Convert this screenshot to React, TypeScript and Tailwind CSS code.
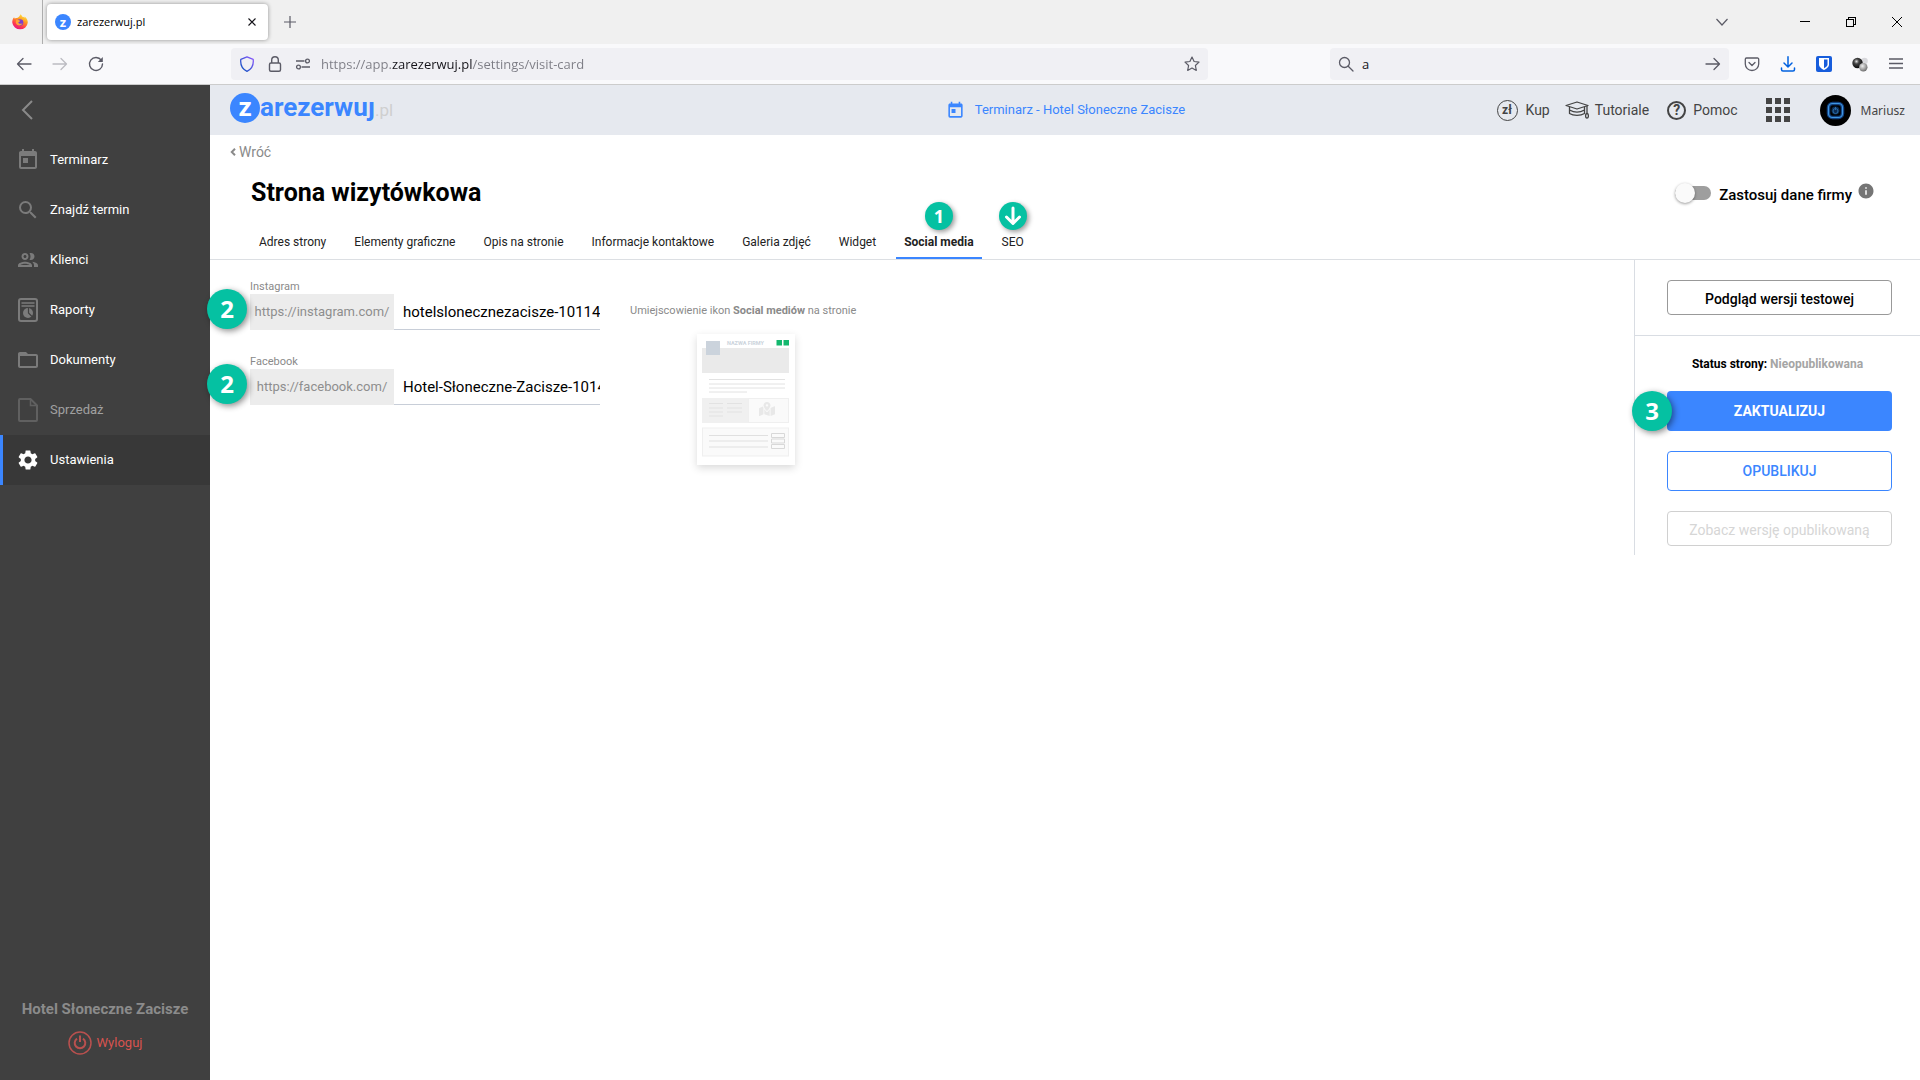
import { useState } from "react";
import type { ReactNode } from "react";
import { FaMapMarkedAlt } from "react-icons/fa";
import { MdFolderOpen, MdInfo, MdOutlineGroup, MdSearch, MdSettings, MdToday } from "react-icons/md";

const TABS = [
    "Adres strony",
    "Elementy graficzne",
    "Opis na stronie",
    "Informacje kontaktowe",
    "Galeria zdjęć",
    "Widget",
    "Social media",
    "SEO",
];

function ReportIcon() {
    return (
        <svg viewBox="0 0 24 24" className="size-6" fill="none" stroke="currentColor">
            <rect x="3" y="1" width="18" height="22" rx="2" strokeWidth="2" />
            <path d="M5.5 5h13M5.5 8h13" strokeWidth="1.5" />
            <circle cx="12" cy="15" r="5" fill="currentColor" stroke="none" />
            <path d="M12.5 10v5l3.500 3.500" stroke="#404040" strokeWidth="1.200" />
        </svg>
    );
}

function FileIcon() {
    return (
        <svg viewBox="0 0 24 24" className="size-6" fill="none" stroke="currentColor" strokeWidth="2">
            <path d="M4 1h10.500L21 7.500V22a1 1 0 0 1-1 1H4a1 1 0 0 1-1-1V2a1 1 0 0 1 1-1z" />
            <path d="M14.500 1.500v6H21" strokeWidth="1.500" />
        </svg>
    );
}

const MENU: { label: string; icon: ReactNode; active?: boolean; dim?: boolean }[] = [
    { label: "Terminarz", icon: <MdToday className="size-6" /> },
    { label: "Znajdź termin", icon: <MdSearch className="size-6" /> },
    { label: "Klienci", icon: <MdOutlineGroup className="size-6" /> },
    { label: "Raporty", icon: <ReportIcon /> },
    { label: "Dokumenty", icon: <MdFolderOpen className="size-6" /> },
    { label: "Sprzedaż", icon: <FileIcon />, dim: true },
    { label: "Ustawienia", icon: <MdSettings className="size-6" />, active: true },
];

function FirefoxIcon() {
    return (
        <svg viewBox="0 0 16 16" className="size-4">
            <defs>
                <linearGradient id="fox" x1="0.8" y1="0" x2="0.3" y2="1">
                    <stop offset="0" stopColor="#fff44f" />
                    <stop offset="0.4" stopColor="#ff9a1f" />
                    <stop offset="0.75" stopColor="#ff3750" />
                    <stop offset="1" stopColor="#e31587" />
                </linearGradient>
            </defs>
            <path d="M8.500.2c1 .8 1.500 1.700 1.800 2.600.9-.2 1.700.300 2.200 1 .200-.6.200-.9 0-1.400 2.200 1.500 3.400 3.800 3.300 6.200A7.800 7.500 0 0 1 .3 8.800C.1 6.500.8 4.500 2.200 3.200c0 .7.100 1 .4 1.400.6-.6 1.400-.8 2.300-.7C5.800 3.800 7.700 2.500 8.500.2z" fill="url(#fox)" />
            <circle cx="8" cy="8.500" r="3.300" fill="#7a3fd0" />
            <path d="M4.500 5.500c2 0 2.300 1 4 1.200-.6 1-1.800.9-2.200 1.800.5 1.500 2.500 1.600 4.200.7-.7 2-3.600 3-5.500 1.500C3.400 9.500 3.500 7 4.500 5.500z" fill="#ffa436" />
        </svg>
    );
}

function BrowserTabs() {
    return (
        <div className="flex h-11 items-center bg-[#f0f0f0] text-[#15141a]">
            <div className="flex h-full w-[43px] items-center border-r border-[#aeaeae] pl-3">
                <FirefoxIcon />
            </div>
            <div className="ml-1 flex h-9 w-[221px] items-center rounded bg-white px-2 shadow-[0_0_4px_rgba(0,0,0,0.4)]">
                <span className="flex size-4 items-center justify-center rounded-full bg-[#3b86ff] text-[13px] leading-none font-bold text-white">z</span>
                <span className="ml-1.5 flex-1 text-[11px] text-black">zarezerwuj.pl</span>
                <button aria-label="Zamknij kartę" className="mr-1">
                    <svg viewBox="0 0 8 8" className="size-2" stroke="currentColor" strokeWidth="1.1">
                        <path d="M.5.5l7 7M7.500.5l-7 7" />
                    </svg>
                </button>
            </div>
            <button aria-label="Nowa karta" className="ml-4">
                <svg viewBox="0 0 12 12" className="size-3" stroke="#5b5b66" strokeWidth="1.200">
                    <path d="M6 0v12M0 6h12" />
                </svg>
            </button>
            <div className="ml-auto flex items-center pr-[18px]">
                <button aria-label="Lista kart" className="mr-[72px]">
                    <svg viewBox="0 0 12 8" className="h-2 w-3" fill="none" stroke="#5b5b66" strokeWidth="1.200">
                        <path d="M.5 1L6 7l5.500-6" />
                    </svg>
                </button>
                <button aria-label="Minimalizuj" className="mr-9">
                    <svg viewBox="0 0 10 10" className="size-2.5" stroke="#000" shapeRendering="crispEdges">
                        <path d="M0 4.500h10" />
                    </svg>
                </button>
                <button aria-label="Przywróć" className="mr-9">
                    <svg viewBox="0 0 10 10" className="size-2.5" fill="none" stroke="#000" shapeRendering="crispEdges">
                        <path d="M.5 2.500h7v7h-7zM2.500 2.500v-2h7v7h-2" />
                    </svg>
                </button>
                <button aria-label="Zamknij">
                    <svg viewBox="0 0 10 10" className="size-2.5" stroke="#000">
                        <path d="M0 0l10 10M10 0L0 10" />
                    </svg>
                </button>
            </div>
        </div>
    );
}

function ArrowRight() {
    return (
        <svg viewBox="0 0 16 16" className="size-4" fill="none" stroke="currentColor" strokeWidth="1.300" strokeLinecap="round" strokeLinejoin="round">
            <path d="M1 8h13.500M9 2.500L14.500 8 9 13.500" />
        </svg>
    );
}

function BrowserToolbar() {
    return (
        <div className="flex h-[41px] items-center border-b border-[#cccccc] bg-[#f9f9fb] pr-1.5 text-[#5b5b66]">
            <div className="flex w-[231px] items-center gap-5 pl-4">
                <button aria-label="Wstecz" className="rotate-180">
                    <ArrowRight />
                </button>
                <button aria-label="Dalej" className="text-[#bcbcc2]">
                    <ArrowRight />
                </button>
                <button aria-label="Odśwież">
                    <svg viewBox="0 0 16 16" className="size-4" fill="none" stroke="currentColor" strokeWidth="1.400">
                        <path d="M13.300 4.200A6.500 6.500 0 1 0 14.500 8" strokeLinecap="round" />
                        <path d="M14.800 1v5h-5z" fill="currentColor" stroke="none" />
                    </svg>
                </button>
            </div>
            <div className="flex h-8 flex-1 items-center rounded bg-[#f0f0f4] px-2">
                <svg viewBox="0 0 16 16" className="size-4" fill="none">
                    <defs>
                        <linearGradient id="shield" x1="1" y1="0" x2="0" y2="1">
                            <stop offset="0" stopColor="#9059ff" />
                            <stop offset="1" stopColor="#0250bb" />
                        </linearGradient>
                    </defs>
                    <path d="M8 .8l6.200 2.500c.6 5.500-1.300 9.800-6.200 12-4.900-2.200-6.800-6.500-6.200-12z" stroke="url(#shield)" strokeWidth="1.300" strokeLinejoin="round" />
                </svg>
                <svg viewBox="0 0 16 16" className="ml-3 size-4" fill="none" stroke="currentColor" strokeWidth="1.400">
                    <rect x="2.500" y="7" width="11" height="8.300" rx="1.500" />
                    <path d="M4.700 7V4a3.300 3.300 0 0 1 6.600 0v3" />
                </svg>
                <svg viewBox="0 0 16 16" className="ml-3 size-4" fill="none" stroke="currentColor" strokeWidth="1.300">
                    <path d="M1 5h8.500M6.500 11H15" />
                    <circle cx="12.500" cy="5" r="1.900" />
                    <circle cx="3.500" cy="11" r="1.900" />
                </svg>
                {/* the domain is darker than the rest of the address */}
                <input
                    aria-label="Adres"
                    defaultValue="https://app.zarezerwuj.pl/settings/visit-card"
                    className="ml-[10px] flex-1 bg-[linear-gradient(90deg,#7c7c84_71px,#15141a_71px_151px,#7c7c84_151px)] bg-clip-text pt-0.5 text-[13px] text-transparent outline-none"
                />
                <svg viewBox="0 0 16 16" className="size-4" fill="none" stroke="currentColor" strokeWidth="1.200" strokeLinejoin="round">
                    <path d="M8 1l2.100 4.500 4.900.6-3.600 3.400.9 4.900L8 12l-4.300 2.400.9-4.900L1 6.100l4.900-.6z" />
                </svg>
            </div>
            <div className="ml-[122px] flex h-8 w-[399px] items-center rounded bg-[#f0f0f4] px-2">
                <svg viewBox="0 0 16 16" className="size-4" fill="none" stroke="currentColor" strokeWidth="1.300" strokeLinecap="round">
                    <circle cx="6.500" cy="6.500" r="5" />
                    <path d="M10.200 10.200l4.800 4.800" />
                </svg>
                <input aria-label="Szukaj" defaultValue="a" className="ml-2 min-w-0 flex-1 pt-0.5 text-[13px] text-[#15141a] outline-none" />
                <button aria-label="Szukaj w sieci">
                    <ArrowRight />
                </button>
            </div>
            <div className="ml-[5px] flex items-center *:flex *:w-9 *:justify-center">
                <button aria-label="Pocket">
                    <svg viewBox="0 0 16 16" className="size-4" fill="none" stroke="currentColor" strokeWidth="1.300" strokeLinecap="round" strokeLinejoin="round">
                        <path d="M2.500 2h11a1.200 1.200 0 0 1 1.200 1.200V8a6.700 6.500 0 0 1-13.400 0V3.200A1.200 1.200 0 0 1 2.500 2z" />
                        <path d="M5 6.500l3 3 3-3" />
                    </svg>
                </button>
                <button aria-label="Pobrane">
                    <svg viewBox="0 0 16 16" className="size-4" fill="none" stroke="#0061e0" strokeWidth="1.500" strokeLinecap="round" strokeLinejoin="round">
                        <path d="M8 .8v10M4 7l4 4 4-4M1.500 12v1.500a1.500 1.500 0 0 0 1.500 1.500h10a1.500 1.500 0 0 0 1.500-1.500V12" />
                    </svg>
                </button>
                <button aria-label="Bitwarden">
                    <svg viewBox="0 0 16 16" className="size-4">
                        <rect width="16" height="16" rx="2" fill="#175ddc" />
                        <path d="M3 2h10v6.500c0 3-3.500 4.800-5 5.500-1.500-.7-5-2.500-5-5.500z" fill="#fff" />
                        <path d="M8 3.500h3.500v5c0 1.700-2 3-3.500 3.800z" fill="#175ddc" />
                    </svg>
                </button>
                <button aria-label="Rozszerzenie">
                    <svg viewBox="0 0 16 16" className="size-4">
                        <defs>
                            <radialGradient id="ball-dark" cx="0.4" cy="0.35" r="0.6">
                                <stop offset="0" stopColor="#ddd" />
                                <stop offset="0.4" stopColor="#444" />
                                <stop offset="1" stopColor="#111" />
                            </radialGradient>
                            <radialGradient id="ball-light" cx="0.4" cy="0.35" r="0.7">
                                <stop offset="0" stopColor="#eee" />
                                <stop offset="1" stopColor="#666" />
                            </radialGradient>
                        </defs>
                        <circle cx="12.500" cy="5" r="3.300" fill="#d8d8dc" />
                        <circle cx="5.500" cy="7" r="5.200" fill="url(#ball-dark)" />
                        <circle cx="11.300" cy="11.300" r="4.200" fill="url(#ball-light)" />
                    </svg>
                </button>
                <button aria-label="Menu przeglądarki">
                    <svg viewBox="0 0 14 12" className="h-3 w-3.5" stroke="currentColor" strokeWidth="1.300">
                        <path d="M0 1h14M0 5.500h14M0 10h14" />
                    </svg>
                </button>
            </div>
        </div>
    );
}

function Sidebar() {
    return (
        <aside className="flex w-[210px] shrink-0 flex-col bg-[#404040]">
            <div className="flex h-[50px] items-center pl-[21px]">
                <button aria-label="Zwiń menu">
                    <svg viewBox="0 0 12 20" className="h-5 w-3" fill="none" stroke="#8a8a8a" strokeWidth="2">
                        <path d="M11 1L2 10l9 9" />
                    </svg>
                </button>
            </div>
            <nav>
                {MENU.map(({ label, icon, active, dim }) => (
                    <a
                        key={label}
                        href="#"
                        className={
                            active
                                ? "flex h-[50px] items-center gap-2.5 border-l-3 border-[#3b86ff] bg-[#383838] pl-[13px]"
                                : "flex h-[50px] items-center gap-2.5 pl-4"
                        }
                    >
                        <span className={active ? "text-white" : dim ? "text-[#606060]" : "text-[#7b7b7b]"}>{icon}</span>
                        <span className={dim ? "text-[13px] text-[#a0a0a0]" : "text-[13px] text-white"}>{label}</span>
                    </a>
                ))}
            </nav>
            <div className="mt-auto flex flex-col items-center pb-[25px]">
                <span className="text-[15px] leading-5 font-bold text-[#8b8b8b]">Hotel Słoneczne Zacisze</span>
                <a href="#" className="mt-3 flex items-center gap-[5px] text-[13px] text-[#d9534f]">
                    <svg viewBox="0 0 24 24" className="size-6" fill="none" stroke="#b9504e" strokeWidth="1.500">
                        <circle cx="12" cy="12" r="11" />
                        <path d="M9 7.600a5.300 5.300 0 1 0 6 0M12 4.500v6.500" strokeWidth="2" />
                    </svg>
                    Wyloguj
                </a>
            </div>
        </aside>
    );
}

function Logo() {
    return (
        <a href="#" className="flex items-center pb-1">
            <span className="flex size-[30px] items-center justify-center rounded-full bg-[#3b86ff] pb-0.5 text-[26px] leading-none font-bold text-white">z</span>
            <span className="flex items-baseline pb-0.5 text-[#3b86ff]">
                {/* the wordmark has a j without its dot */}
                <span className="text-[26px] leading-8 font-bold">arezerwuȷ</span>
                <span className="text-[17px] text-[#cfcfcf]">.pl</span>
            </span>
        </a>
    );
}

function AppHeader() {
    return (
        <header className="grid h-[50px] grid-cols-3 items-center bg-[#e6e9ef] pr-[15px] pl-5 text-sm text-[#444]">
            <Logo />
            <a href="#" className="flex items-center justify-center gap-2.5 pr-1 text-[13px] text-[#3b86ff]">
                <MdToday className="size-[19px]" />
                Terminarz - Hotel Słoneczne Zacisze
            </a>
            <div className="flex items-center justify-end">
                <a href="#" className="flex items-center gap-2">
                    <span className="flex size-[21px] items-center justify-center rounded-full border-[1.5px] border-[#444] pb-px text-xs leading-none font-bold">zł</span>
                    Kup
                </a>
                <a href="#" className="ml-[15px] flex items-center gap-[6px]">
                    <svg viewBox="0 0 24 18" className="h-[18px] w-6" fill="none" stroke="currentColor" strokeWidth="1.300" strokeLinejoin="round">
                        <path d="M1 4.500L12 1l11 3.500L12 8z" />
                        <path d="M4.500 6v6.500c4 2.500 11 2.500 15 0V6M4.500 9c4.500 2.500 10.500 2.500 15 0" />
                        <path d="M22 5v7.500" />
                        <ellipse cx="22" cy="14.800" rx="1.400" ry="2.300" />
                    </svg>
                    Tutoriale
                </a>
                <a href="#" className="ml-[18px] flex items-center gap-[7px]">
                    <span className="flex size-[19px] items-center justify-center rounded-full border-2 border-[#444] text-sm leading-none font-bold">?</span>
                    Pomoc
                </a>
                <button aria-label="Aplikacje" className="ml-7">
                    <svg viewBox="0 0 24 24" className="size-6" fill="#444">
                        {[0, 9, 18].map((y) => [0, 9, 18].map((x) => <rect key={`${x}-${y}`} x={x} y={y} width="6" height="6" />))}
                    </svg>
                </button>
                <a href="#" className="ml-[30px] flex items-center gap-2.5 font-['Noto_Sans',sans-serif] text-xs">
                    <svg viewBox="0 0 31 31" className="size-[31px]" fill="none">
                        <circle cx="15.500" cy="15.500" r="15.500" fill="#000" />
                        <rect x="8.500" y="8.500" width="14" height="14" rx="4" stroke="#12407f" strokeWidth="3.500" />
                        <rect x="8.500" y="8.500" width="14" height="14" rx="4" stroke="#3f96e0" strokeWidth="1.200" />
                        <circle cx="15.500" cy="15.500" r="4" fill="#0c2c55" />
                        <circle cx="15.500" cy="16" r="2.500" stroke="#2a6ca6" />
                        <path d="M15.500 12v3" stroke="#2a6ca6" />
                    </svg>
                    <span className="pt-0.5">Mariusz</span>
                </a>
            </div>
        </header>
    );
}

function TabBadge({ children }: { children: ReactNode }) {
    return (
        <span className="absolute -top-[15px] left-1/2 flex size-7 -translate-x-1/2 items-center justify-center rounded-full bg-[#05c1a2] font-['Open_Sans',sans-serif] text-lg leading-none font-bold text-white shadow-[2px_2px_5px_rgba(0,0,0,0.4)]">
            {children}
        </span>
    );
}

function StepBadge({ step, className }: { step: number; className: string }) {
    return (
        <span className={`absolute ${className} flex size-10 items-center justify-center rounded-full bg-[#05c1a2] font-['Open_Sans',sans-serif] text-2xl leading-none font-bold text-white shadow-[2px_2px_6px_rgba(0,0,0,0.45)]`}>
            {step}
        </span>
    );
}

function SocialField({ id, label, prefix, value }: { id: string; label: string; prefix: string; value: string }) {
    return (
        <div className="relative">
            <label htmlFor={id} className="block h-4 text-[11px] leading-[18px] text-[#8a8a8a]">{label}</label>
            <div className="flex h-9">
                <span className="flex w-36 items-center justify-center bg-[#ececec] text-[13px] text-[#8e8e8e]">{prefix}</span>
                <input id={id} defaultValue={value} className="w-[206px] border-b border-[#c8ced8] pt-0.5 pl-[9px] text-[15px] text-black outline-none" />
            </div>
            <StepBadge step={2} className="top-[11px] -left-[43px]" />
        </div>
    );
}

function SitePreview() {
    return (
        <svg viewBox="0 0 98 131" className="mt-[15px] h-[131px] w-[98px] bg-white shadow-[0_3px_8px_rgba(0,0,0,0.15)]" fill="none">
            <rect x="5" y="14" width="87" height="25" fill="#eaeaea" />
            <rect x="9" y="7" width="14" height="14" fill="#cbd3dc" />
            <text x="30" y="11" fontSize="5.500" fontWeight="700" fill="#cbd3dc">NAZWA FIRMY</text>
            <rect x="79.500" y="6" width="5.500" height="5.500" fill="#14b86e" />
            <rect x="86.500" y="6" width="5.500" height="5.500" fill="#14b86e" />
            <path d="M12 45.500h76M12 50h76M12 54h76M12 58h38" stroke="#e2e2e2" />
            <rect x="5" y="64" width="46" height="25" fill="#f0f0f0" />
            <rect x="51.500" y="64.500" width="40" height="24" fill="#fafafa" stroke="#efefef" />
            <path d="M12 69.500h14M12 74h14M12 78h14M12 82h14M30 69.500h15M30 74h15M30 78h15" stroke="#e2e2e2" />
            <FaMapMarkedAlt x="62" y="67" width="18" height="17" color="#e8e8e8" />
            <rect x="5.500" y="94" width="86" height="28" fill="#fafafa" stroke="#efefef" />
            <path d="M12 101.500h59M12 107h59M12 113h59" stroke="#e0e0e0" />
            <path d="M74.500 99.500h13v4h-13zM74.500 105h13v4h-13zM74.500 110.500h13v4h-13z" stroke="#d8d8d8" />
        </svg>
    );
}

function PublishPanel() {
    return (
        <section className="w-[286px] shrink-0 border-l border-[#d9dde3]">
            <div className="border-b border-[#d9dde3] py-5 pr-7 pl-8">
                <button className="h-[35px] w-full rounded border border-[#999] pt-0.5 text-sm font-medium text-black">Podgląd wersji testowej</button>
            </div>
            <div className="flex flex-col gap-5 pt-[18px] pr-7 pb-[9px] pl-8">
                <p className="-mb-[3px] pr-1 text-center text-xs leading-5 font-bold text-black">
                    Status strony: <span className="text-[#a5a5a5]">Nieopublikowana</span>
                </p>
                <div className="relative">
                    <button className="h-10 w-full rounded bg-[#3b86ff] text-sm font-bold text-white">ZAKTUALIZUJ</button>
                    <StepBadge step={3} className="top-0 -left-[35px]" />
                </div>
                <button className="h-10 rounded border border-[#3b86ff] text-sm font-medium text-[#3b86ff]">OPUBLIKUJ</button>
                <button disabled className="h-[35px] rounded border border-[#d0d0d0] pt-0.5 text-sm text-[#d6d6d6]">Zobacz wersję opublikowaną</button>
            </div>
        </section>
    );
}

export default function App() {
    const [tab, setTab] = useState("Social media");

    return (
        <div className="flex min-h-screen flex-col bg-white font-['Roboto',sans-serif]">
            <div className="font-['Open_Sans',sans-serif]">
                <BrowserTabs />
                <BrowserToolbar />
            </div>
            <div className="flex flex-1">
                <Sidebar />
                <main className="min-w-0 flex-1">
                    <AppHeader />
                    <div className="flex h-[34px] items-center pl-5">
                        <a href="#" className="flex items-center gap-[3px] text-sm text-[#8a8a8a]">
                            <svg viewBox="0 0 6 8" className="h-2 w-1.5" fill="none" stroke="currentColor" strokeWidth="2">
                                <path d="M5 .8L1.800 4 5 7.200" />
                            </svg>
                            Wróć
                        </a>
                    </div>
                    <div className="flex h-12 items-center justify-between pr-[45px] pl-[41px]">
                        <h1 className="text-[25px] font-bold text-black">Strona wizytówkowa</h1>
                        <div className="flex items-center">
                            <label className="flex items-center gap-2 text-[15px] font-medium text-black">
                                <span className="relative h-5 w-9">
                                    <input type="checkbox" className="peer sr-only" />
                                    <span className="absolute inset-x-0 top-[3px] h-3.5 rounded-full bg-[#9e9e9e] peer-checked:bg-[#9cc2ff]" />
                                    <span className="absolute top-0 left-0 size-5 rounded-full bg-[#fafafa] shadow-[0_1px_3px_rgba(0,0,0,0.4)] peer-checked:left-4" />
                                </span>
                                <span className="pt-1">Zastosuj dane firmy</span>
                            </label>
                            <MdInfo className="mb-1 ml-[5px] size-[18px] text-[#757575]" />
                        </div>
                    </div>
                    <div role="tablist" className="flex gap-3 border-b border-[#dcdfe3] pl-[41px]">
                        {TABS.map((name) => (
                            <button
                                key={name}
                                role="tab"
                                aria-selected={tab === name}
                                onClick={() => setTab(name)}
                                className={
                                    tab === name
                                        ? "relative h-[42px] border-b-2 border-[#3b86ff] px-2 pt-2.5 text-xs font-bold text-[#222]"
                                        : "relative h-[42px] border-b-2 border-transparent px-2 pt-2.5 text-xs text-[#222]"
                                }
                            >
                                {name}
                                {name === "Social media" && <TabBadge>1</TabBadge>}
                                {name === "SEO" && (
                                    <TabBadge>
                                        <svg viewBox="0 0 18 20" className="h-5 w-[18px]" fill="none" stroke="#fff" strokeWidth="3" strokeLinecap="round" strokeLinejoin="round">
                                            <path d="M9 2v15M2.500 11L9 17.500l6.500-6.500" />
                                        </svg>
                                    </TabBadge>
                                )}
                            </button>
                        ))}
                    </div>
                    <div className="flex">
                        <form className="flex flex-1 gap-[30px] pt-[18px] pl-10">
                            <div className="flex flex-col gap-[23px]">
                                <SocialField id="instagram" label="Instagram" prefix="https://instagram.com/" value="hotelslonecznezacisze-10114" />
                                <SocialField id="facebook" label="Facebook" prefix="https://facebook.com/" value="Hotel-Słoneczne-Zacisze-10145" />
                            </div>
                            <div className="flex flex-col items-center pt-[25px]">
                                <p className="pr-1.5 text-[11px] leading-4 text-[#8a8a8a]">
                                    Umiejscowienie ikon <b>Social mediów</b> na stronie
                                </p>
                                <SitePreview />
                            </div>
                        </form>
                        <PublishPanel />
                    </div>
                </main>
            </div>
        </div>
    );
}
